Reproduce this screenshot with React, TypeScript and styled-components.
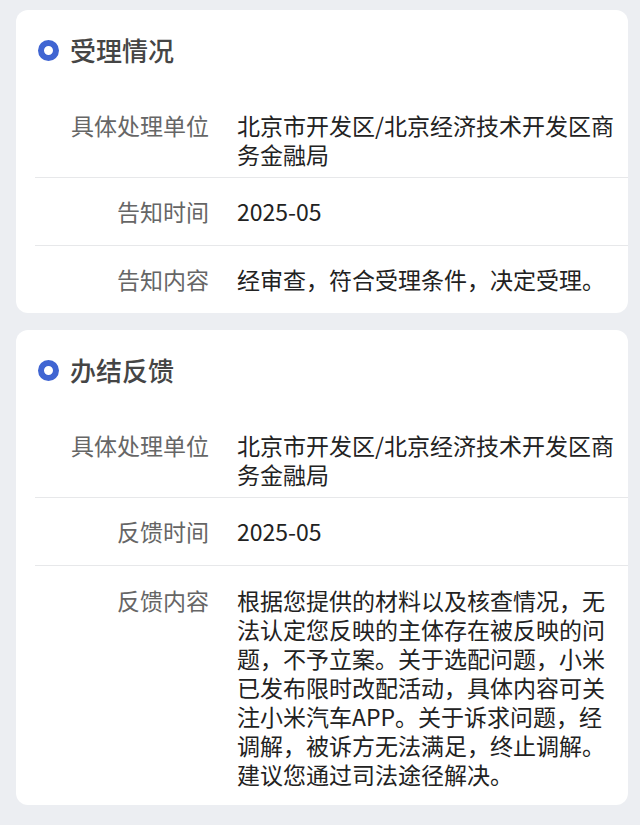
import styled, { createGlobalStyle } from "styled-components";

const Global = createGlobalStyle`
  body {
    margin: 0;
    background: #eceef2;
    font-family: "Noto Sans CJK SC", "Noto Sans", sans-serif;
  }
`;

const Page = styled.div`
  display: flex;
  flex-direction: column;
  gap: 17px;
  padding: 10px 12px 20px 16px;
`;

const Card = styled.section`
  background: #fff;
  border-radius: 12px;
  overflow: hidden;
`;

const Header = styled.div`
  display: flex;
  align-items: center;
  gap: 11px;
  height: 36px;
  padding: 22px 0 31px 22px;
`;

const Ring = styled.span`
  width: 21px;
  height: 21px;
  box-sizing: border-box;
  border-radius: 50%;
  border: 6.5px solid #4065d2;
  flex-shrink: 0;
`;

const Title = styled.h2`
  margin: 0;
  font-size: 26px;
  font-weight: 500;
  color: #454545;
  line-height: 36px;
`;

const Row = styled.div<{ $pt: number; $pb: number; $line?: boolean }>`
  display: grid;
  grid-template-columns: 174px 1fr;
  column-gap: 28px;
  margin-left: 19px;
  padding: ${(p) => p.$pt}px 0 ${(p) => p.$pb}px;
  border-bottom: ${(p) => (p.$line ? "1px solid #e7e8ea" : "none")};
  font-size: 23px;
  line-height: 29px;
`;

const Label = styled.div`
  text-align: right;
  color: #666;
`;

const Value = styled.div`
  color: #222;
  padding-right: 6px;
`;

type Item = { label: string; value: string; pt: number; pb: number };

const Section = ({ title, items }: { title: string; items: Item[] }) => (
  <Card>
    <Header>
      <Ring />
      <Title>{title}</Title>
    </Header>
    {items.map((it, i) => (
      <Row key={it.label} $pt={it.pt} $pb={it.pb} $line={i < items.length - 1}>
        <Label>{it.label}</Label>
        <Value>{it.value}</Value>
      </Row>
    ))}
  </Card>
);

const accept: Item[] = [
  { label: "具体处理单位", value: "北京市开发区/北京经济技术开发区商务金融局", pt: 12, pb: 8 },
  { label: "告知时间", value: "2025-05", pt: 19, pb: 19 },
  { label: "告知内容", value: "经审查，符合受理条件，决定受理。", pt: 19, pb: 19 },
];

const feedback: Item[] = [
  { label: "具体处理单位", value: "北京市开发区/北京经济技术开发区商务金融局", pt: 12, pb: 8 },
  { label: "反馈时间", value: "2025-05", pt: 19, pb: 19 },
  {
    label: "反馈内容",
    value:
      "根据您提供的材料以及核查情况，无法认定您反映的主体存在被反映的问题，不予立案。关于选配问题，小米已发布限时改配活动，具体内容可关注小米汽车APP。关于诉求问题，经调解，被诉方无法满足，终止调解。建议您通过司法途径解决。",
    pt: 20,
    pb: 16,
  },
];

const App = () => (
  <>
    <Global />
    <Page>
      <Section title="受理情况" items={accept} />
      <Section title="办结反馈" items={feedback} />
    </Page>
  </>
);

export default App;
